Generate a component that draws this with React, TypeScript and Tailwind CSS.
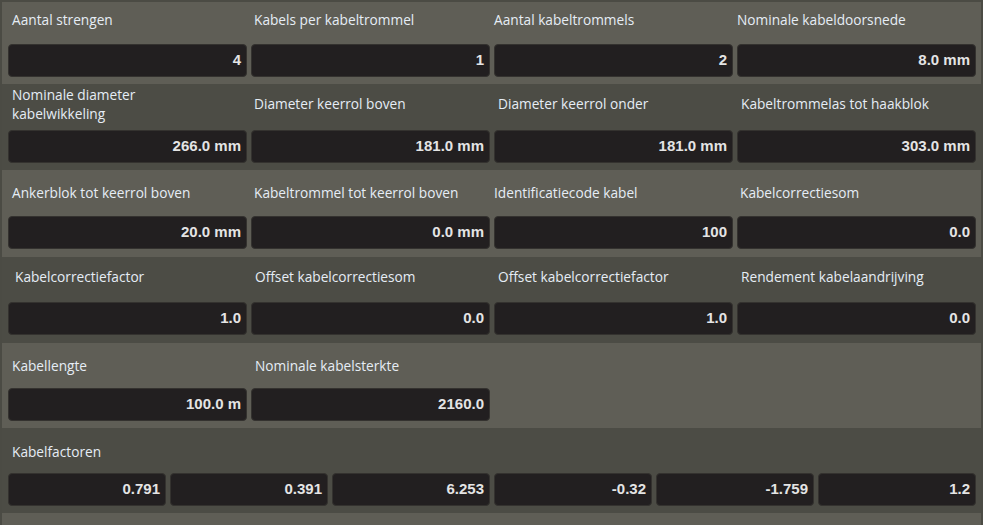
import React from "react";

type Field = { label: string; value: string; pl: number; pt?: number; narrow?: boolean };

// each row: fields + vertical rhythm (label block height, text offset, bottom padding, tone)
type Row = { fields: Field[]; h: number; pt: number; pb: number; dark: boolean };

const rows: Row[] = [
  {
    h: 42, pt: 8, pb: 7, dark: false,
    fields: [
      { label: "Aantal strengen", value: "4", pl: 4 },
      { label: "Kabels per kabeltrommel", value: "1", pl: 3 },
      { label: "Aantal kabeltrommels", value: "2", pl: 0 },
      { label: "Nominale kabeldoorsnede", value: "8.0 mm", pl: 0 },
    ],
  },
  {
    h: 46, pt: 10, pb: 7, dark: true,
    fields: [
      { label: "Nominale diameter kabelwikkeling", value: "266.0 mm", pl: 4, pt: 1, narrow: true },
      { label: "Diameter keerrol boven", value: "181.0 mm", pl: 3 },
      { label: "Diameter keerrol onder", value: "181.0 mm", pl: 4 },
      { label: "Kabeltrommelas tot haakblok", value: "303.0 mm", pl: 4 },
    ],
  },
  {
    h: 46, pt: 13, pb: 8, dark: false,
    fields: [
      { label: "Ankerblok tot keerrol boven", value: "20.0 mm", pl: 4 },
      { label: "Kabeltrommel tot keerrol boven", value: "0.0 mm", pl: 3 },
      { label: "Identificatiecode kabel", value: "100", pl: 0 },
      { label: "Kabelcorrectiesom", value: "0.0", pl: 3 },
    ],
  },
  {
    h: 45, pt: 10, pb: 8, dark: true,
    fields: [
      { label: "Kabelcorrectiefactor", value: "1.0", pl: 7 },
      { label: "Offset kabelcorrectiesom", value: "0.0", pl: 4 },
      { label: "Offset kabelcorrectiefactor", value: "1.0", pl: 4 },
      { label: "Rendement kabelaandrijving", value: "0.0", pl: 4 },
    ],
  },
  {
    h: 45, pt: 13, pb: 7, dark: false,
    fields: [
      { label: "Kabellengte", value: "100.0 m", pl: 4 },
      { label: "Nominale kabelsterkte", value: "2160.0", pl: 4 },
    ],
  },
];

const factors = ["0.791", "0.391", "6.253", "-0.32", "-1.759", "1.2"];

const ValueBox = ({ value }: { value: string }) => (
  <div className="h-[33px] rounded-[4px] bg-[#221f20] border border-[#34322f] flex items-center justify-end pr-[5px] text-[15px] font-bold text-[#e4e4e4] [font-family:'Liberation_Sans',Arial,sans-serif]">
    {value}
  </div>
);

export default function App() {
  return (
    <div className="w-[983px] h-[525px] overflow-hidden bg-[#4b4b44] pt-[2px] pl-[2px] pr-[2px] [font-family:'Open_Sans','Noto_Sans',sans-serif]">
      {rows.map((row, i) => (
        <div
          key={i}
          className={`pl-[6px] pr-[5px] ${row.dark ? "bg-[#4c4c45]" : "bg-[#5f5e56]"}`}
          style={{ paddingBottom: row.pb }}
        >
          <div className="grid grid-cols-4 gap-x-[4px]">
            {row.fields.map((f) => (
              <div key={f.label} className="flex flex-col">
                <div
                  className="text-[13.7px] leading-[19px] text-[#e6edf5]"
                  style={{ height: row.h, paddingTop: f.pt ?? row.pt, paddingLeft: f.pl }}
                >
                  <div className={f.narrow ? "w-[140px]" : "whitespace-nowrap"}>{f.label}</div>
                </div>
                <ValueBox value={f.value} />
              </div>
            ))}
          </div>
        </div>
      ))}

      {/* cable factors, six values on one line */}
      <div className="pl-[6px] pr-[5px] pb-[7px] bg-[#4c4c45]">
        <div className="h-[45px] pt-[14px] pl-[4px] text-[13.7px] leading-[19px] text-[#e6edf5]">
          Kabelfactoren
        </div>
        <div className="grid grid-cols-6 gap-x-[4px]">
          {factors.map((v, i) => (
            <ValueBox key={i} value={v} />
          ))}
        </div>
      </div>
      <div className="h-[12px] bg-[#5f5e56]" />
    </div>
  );
}
